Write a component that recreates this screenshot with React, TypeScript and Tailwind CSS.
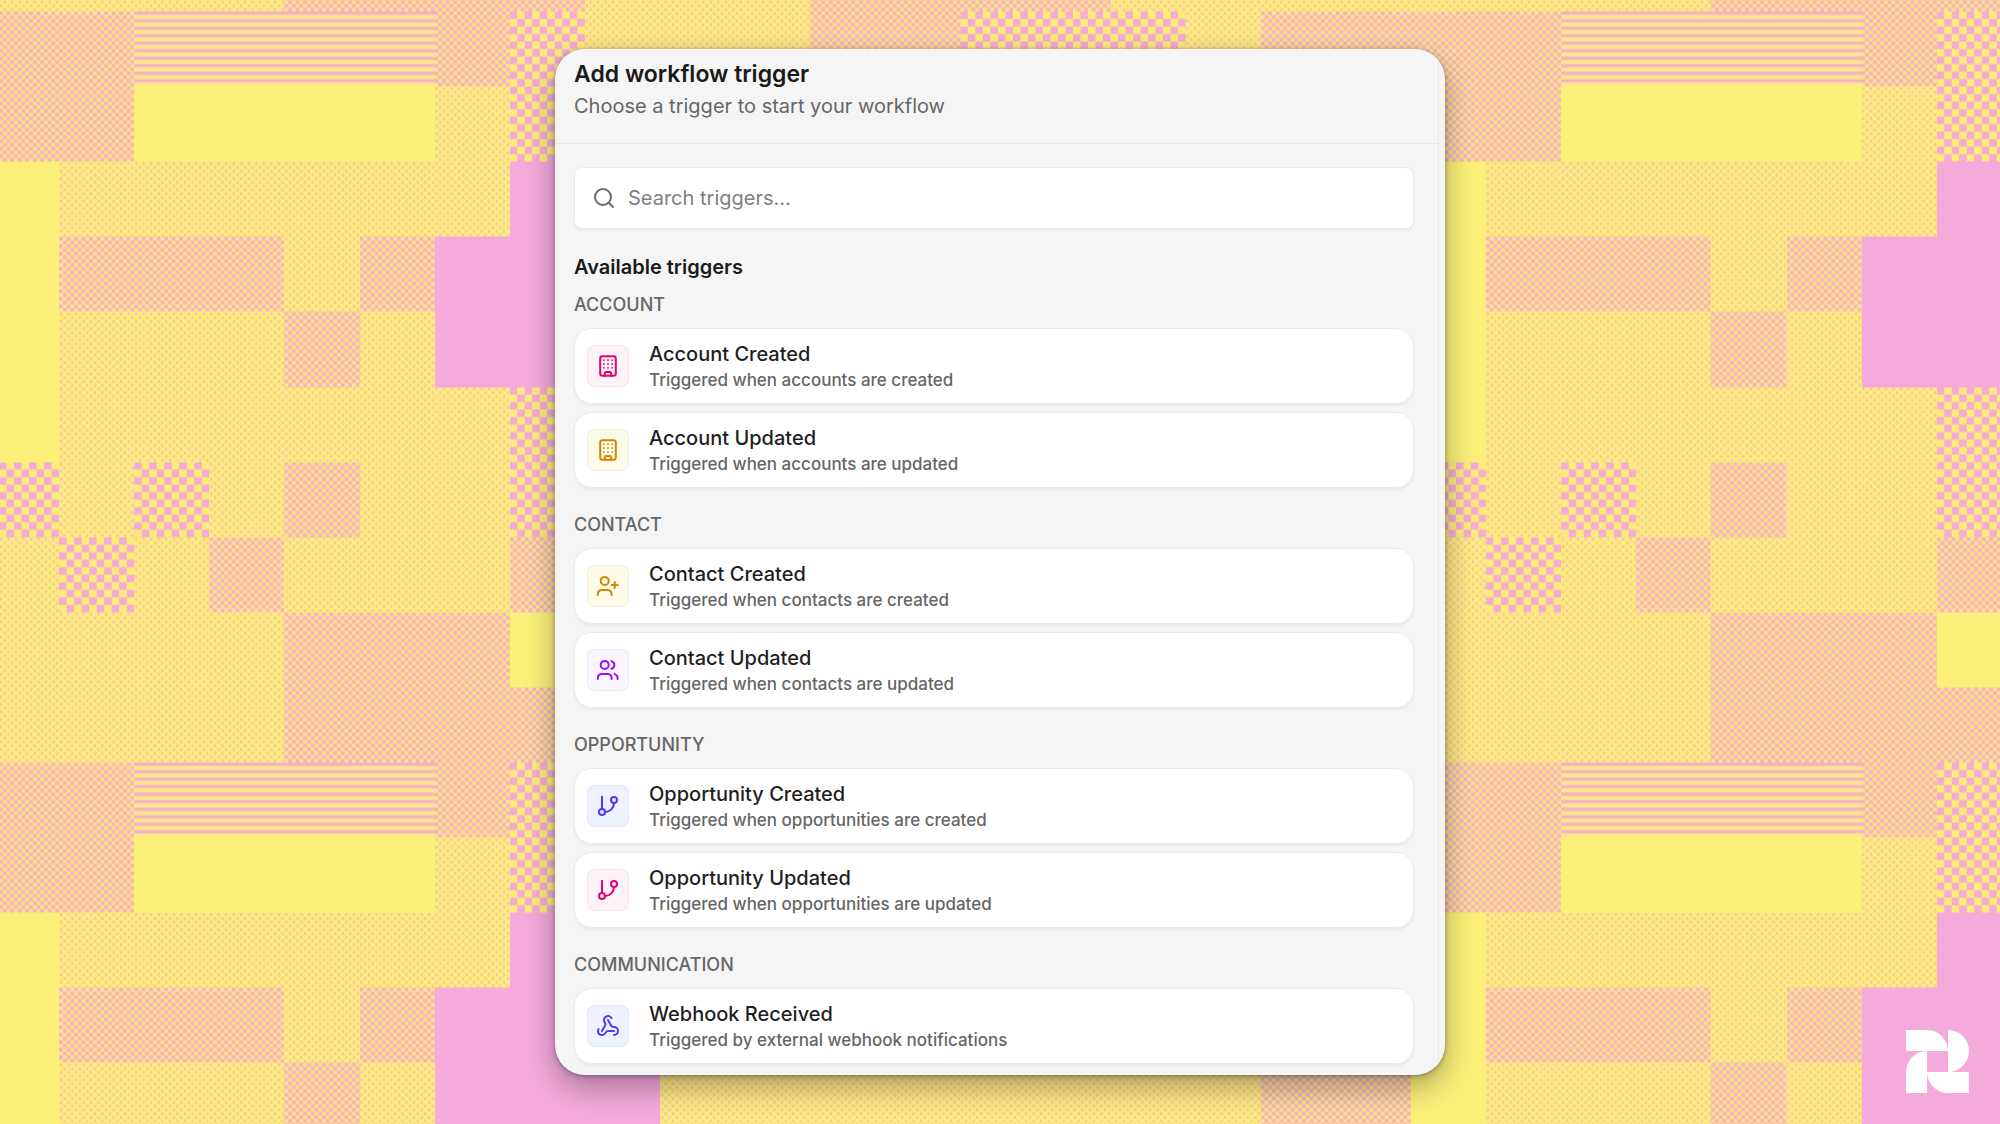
import { useState } from "react"
import type { ReactNode } from "react"
import { Search, Webhook } from "lucide-react"

interface Trigger {
  title: string
  description: string
  icon: ReactNode
  color: string
}

interface TriggerGroup {
  name: string
  triggers: Trigger[]
}

const strokeProps = {
  width: 24,
  height: 24,
  viewBox: "0 0 24 24",
  fill: "none",
  stroke: "currentColor",
  strokeWidth: 2,
  strokeLinecap: "round" as const,
  strokeLinejoin: "round" as const,
}

function BuildingIcon() {
  return (
    <svg {...strokeProps} aria-hidden="true">
      <rect x="4.2" y="2.2" width="15.6" height="19.6" rx="2.2" />
      <path d="M8.8 21.8v-2.4a1.4 1.4 0 0 1 1.4-1.4h3.6a1.4 1.4 0 0 1 1.4 1.4v2.4" />
      {[6.2, 10, 13.8].map((y) => (
        <path key={y} strokeWidth="1.8" d={`M7.9 ${y}h.01M12 ${y}h.01M16.1 ${y}h.01`} />
      ))}
    </svg>
  )
}

function UserPlusIcon() {
  return (
    <svg {...strokeProps} aria-hidden="true">
      <circle cx="8.7" cy="6.9" r="4" />
      <path d="M1.8 20.9v-1a4 4 0 0 1 4-4h5.8a4 4 0 0 1 4 4v1" />
      <path d="M18.7 8v6M15.7 11h6" />
    </svg>
  )
}

function UsersIcon() {
  return (
    <svg {...strokeProps} aria-hidden="true">
      <circle cx="8.7" cy="6.9" r="4" />
      <path d="M1.8 20.9v-1a4 4 0 0 1 4-4h5.8a4 4 0 0 1 4 4v1" />
      <path d="M15.4 3.1a4 4 0 0 1 0 7.7" />
      <path d="M18.6 16.1a4 4 0 0 1 3 3.8v1" />
    </svg>
  )
}

function BranchIcon() {
  return (
    <svg {...strokeProps} aria-hidden="true">
      <path d="M6 2.8V15" />
      <circle cx="18" cy="6" r="3" />
      <circle cx="6" cy="18" r="3" />
      <path d="M18 9a9 9 0 0 1-9 9" />
    </svg>
  )
}

const pink = "bg-pink-50 text-pink-600"
const yellow = "bg-yellow-50 text-yellow-600"
const purple = "bg-purple-50 text-purple-600"
const indigo = "bg-indigo-50 text-indigo-600"

const groups: TriggerGroup[] = [
  {
    name: "Account",
    triggers: [
      { title: "Account Created", description: "Triggered when accounts are created", icon: <BuildingIcon />, color: pink },
      { title: "Account Updated", description: "Triggered when accounts are updated", icon: <BuildingIcon />, color: yellow },
    ],
  },
  {
    name: "Contact",
    triggers: [
      { title: "Contact Created", description: "Triggered when contacts are created", icon: <UserPlusIcon />, color: yellow },
      { title: "Contact Updated", description: "Triggered when contacts are updated", icon: <UsersIcon />, color: purple },
    ],
  },
  {
    name: "Opportunity",
    triggers: [
      { title: "Opportunity Created", description: "Triggered when opportunities are created", icon: <BranchIcon />, color: indigo },
      { title: "Opportunity Updated", description: "Triggered when opportunities are updated", icon: <BranchIcon />, color: pink },
    ],
  },
  {
    name: "Communication",
    triggers: [
      {
        title: "Webhook Received",
        description: "Triggered by external webhook notifications",
        icon: <Webhook size={24} strokeWidth={2} aria-hidden="true" />,
        color: indigo,
      },
    ],
  },
]

// One character per 20x20 block: s = dots, d = dense checks, c = big checks,
// l = lines, y = plain yellow, p = plain pink
const quilt = [
  "ddlllldcsssddcccsdd",
  "ddyyyyscsssddcccsdd",
  "yssssssppssssssssss",
  "ydddsdpppssssssssss",
  "ysssdspppssssssssdd",
  "yssssssccssssssssss",
  "cscsdsscsssssssssss",
  "scsdsssdsssssssssss",
  "ssssdddysssssssssss",
  "ssssddddsssddddssss",
]

const blockFill: Record<string, string> = {
  s: "url(#dots)",
  d: "url(#dense)",
  c: "url(#checks)",
  l: "url(#lines)",
  y: "#fbf079",
  p: "#f4aadb",
}

function QuiltBackground() {
  return (
    <svg className="absolute inset-0 h-full w-full" aria-hidden="true">
      <defs>
        <pattern id="dots" width="2" height="2" patternUnits="userSpaceOnUse">
          <rect width="2" height="2" fill="#feec7e" />
          <path d="M.2.2h.65v.65H.2zM1.2 1.2h.65v.65h-.65z" fill="#f4c2a0" />
        </pattern>
        <pattern id="dense" width="2" height="2" patternUnits="userSpaceOnUse">
          <rect width="2" height="2" fill="#fde38a" />
          <path d="M0 0h1v1H0zM1 1h1v1H1z" fill="#f6b2bf" />
        </pattern>
        <pattern id="checks" width="4" height="4" patternUnits="userSpaceOnUse">
          <rect width="4" height="4" fill="#fdec78" />
          <path d="M0 0h2v2H0zM2 2h2v2H2z" fill="#f5abd3" />
        </pattern>
        <pattern id="lines" width="2" height="2" patternUnits="userSpaceOnUse">
          <rect width="2" height="2" fill="#fee989" />
          <path d="M0 0h2v.9H0z" fill="#f5b0c6" />
        </pattern>
        <pattern
          id="quilt"
          width="380"
          height="200"
          patternUnits="userSpaceOnUse"
          patternTransform="translate(-16 11.5) scale(3.755)"
        >
          <g shapeRendering="crispEdges">
            {quilt.map((row, y) =>
              row.split("").map((block, x) => (
                <rect key={`${x}-${y}`} x={x * 20} y={y * 20} width="20" height="20" fill={blockFill[block]} />
              ))
            )}
          </g>
        </pattern>
      </defs>
      <rect width="100%" height="100%" fill="url(#quilt)" />
    </svg>
  )
}

function Logo() {
  return (
    <svg className="absolute right-[31px] bottom-[31px]" width="63" height="63" viewBox="0 0 63 63" fill="#fff" aria-hidden="true">
      <path d="M0 0h21a21 21 0 0 1 21 21H0z" />
      <path d="M42 0a21 21 0 0 1 0 42z" />
      <path d="M0 63V42a21 21 0 0 1 21-21v42z" />
      <path d="M63 42H21a21 21 0 0 0 21 21h21z" />
    </svg>
  )
}

function TriggerCard({ trigger }: { trigger: Trigger }) {
  return (
    <button
      type="button"
      className="flex w-full items-center gap-5 rounded-[18px] border border-[#ededed] bg-white px-3 py-[11px] text-left shadow-[0_2px_3px_rgba(0,0,0,0.05)]"
    >
      <span className={`flex size-[42px] shrink-0 items-center justify-center rounded-lg border border-black/5 ${trigger.color}`}>
        {trigger.icon}
      </span>
      <span className="flex flex-col">
        <span className="text-[20px] leading-7 font-medium text-[#1f1f1f]">{trigger.title}</span>
        <span className="text-[17px] leading-6 font-medium text-[#666666]">{trigger.description}</span>
      </span>
    </button>
  )
}

export default function App() {
  const [query, setQuery] = useState("")

  const visibleGroups = groups
    .map((group) => ({
      ...group,
      triggers: group.triggers.filter((t) => t.title.toLowerCase().includes(query.toLowerCase())),
    }))
    .filter((group) => group.triggers.length > 0)

  return (
    <div className="relative flex min-h-screen items-start justify-center overflow-hidden py-[49px] font-['Inter',sans-serif]">
      <QuiltBackground />
      <Logo />

      <main className="relative w-full max-w-[890px] overflow-hidden rounded-[30px] bg-[#f5f5f5] pr-[6px] shadow-[0_12px_30px_rgba(0,0,0,0.32),0_1px_4px_rgba(0,0,0,0.35)]">
        <div className="border-r border-[#e9e9e9]">
          <header className="flex flex-col gap-1 border-b border-[#e8e8e8] px-[19px] pt-[11px] pb-[23px]">
            <h1 className="text-[23px] leading-7 font-semibold text-[#1a1a1a]">Add workflow trigger</h1>
            <p className="text-[20px] leading-7 text-[#666666]">Choose a trigger to start your workflow</p>
          </header>

          <div className="pt-[23px] pr-6 pb-[11px] pl-[19px]">
            <label className="flex h-[62px] items-center gap-3 rounded-lg border border-[#ebebeb] bg-white px-[17px] shadow-[0_2px_2px_rgba(0,0,0,0.05)]">
              <Search size={24} strokeWidth={2} className="shrink-0 text-[#6a6a6a]" aria-hidden="true" />
              <input
                type="text"
                aria-label="Search triggers"
                placeholder="Search triggers..."
                value={query}
                onChange={(e) => setQuery(e.target.value)}
                className="w-full bg-transparent text-[20px] leading-7 text-[#1a1a1a] outline-none placeholder:text-[#808080]"
              />
            </label>

            <h2 className="mt-6 mb-3 text-[20px] leading-7 font-semibold text-[#1a1a1a]">Available triggers</h2>

            <div className="flex flex-col gap-[25px]">
              {visibleGroups.map((group) => (
                <section key={group.name}>
                  <h3 className="mb-[11px] text-[18px] leading-6 font-medium text-[#666666] uppercase">{group.name}</h3>
                  <div className="flex flex-col gap-2">
                    {group.triggers.map((trigger) => (
                      <TriggerCard key={trigger.title} trigger={trigger} />
                    ))}
                  </div>
                </section>
              ))}
            </div>
          </div>
        </div>
      </main>
    </div>
  )
}
